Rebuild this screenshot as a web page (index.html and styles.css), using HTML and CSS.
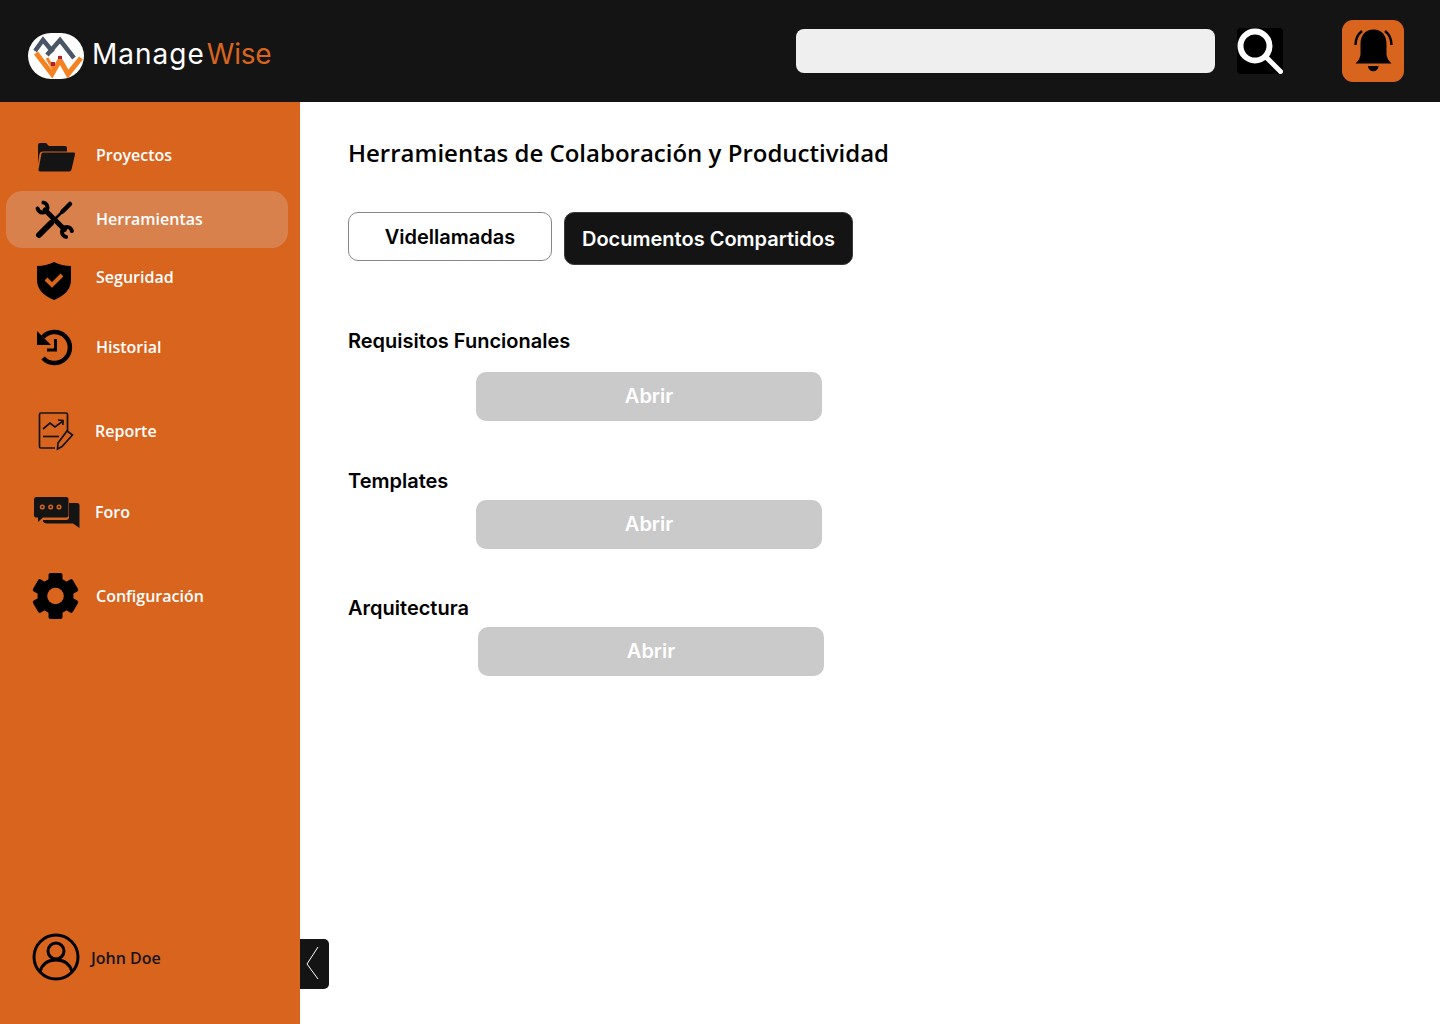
FILE: index.html
```html
<!DOCTYPE html>
<html lang="es">
<head>
    <meta charset="UTF-8">
    <meta name="viewport" content="width=device-width, initial-scale=1.0">
    <title>ManageWise - Herramientas</title>
    <link rel="stylesheet" href="styles.css">
</head>
<body>
    <header class="topbar">
        <a class="brand" href="#">
            <svg class="brand-mark" viewBox="28 33 56 46" width="56" height="46">
                <rect x="28" y="33" width="56" height="46" rx="23" fill="#fff"/>
                <g fill="none" stroke-linejoin="miter">
                    <polyline points="35,51 43,40 53,52" stroke="#4a5565" stroke-width="4.500"/>
                    <polyline points="47,55 60,40 74,58" stroke="#4a5565" stroke-width="4.500"/>
                    <polyline points="36,53 52,74 60,60 68,74 81,58" stroke="#f58220" stroke-width="5"/>
                    <polyline points="47,58 54,70" stroke="#f58220" stroke-width="3"/>
                </g>
                <rect x="51" y="62" width="4" height="4" fill="#b01e3c"/>
                <rect x="58" y="56" width="4" height="3" fill="#b01e3c"/>
            </svg>
            <span class="brand-name">Manage<span class="brand-accent">Wise</span></span>
        </a>
        <input class="search-input" type="text" aria-label="Buscar">
        <button class="search-btn" aria-label="Buscar">
            <svg viewBox="0 0 46 46" width="46" height="46" fill="none" stroke="#fff">
                <circle cx="18" cy="18" r="14.500" stroke-width="6"/>
                <line x1="29" y1="29" x2="43.500" y2="43.500" stroke-width="5" stroke-linecap="round"/>
            </svg>
        </button>
        <button class="bell-btn" aria-label="Notificaciones">
            <svg viewBox="0 0 62 62" width="62" height="62">
                <path d="M31.500 9.500C22.500 9.500 18.500 16 18.500 24V34Q18.500 39 13.500 43.500H49.500Q44.500 39 44.500 34V24C44.500 16 40.500 9.500 31.500 9.500z" fill="#000"/>
                <path d="M26 46H36.500a5.200 5.200 0 0 1-10.500 0z" fill="#000"/>
                <path d="M13.500 25Q13.500 16 20 11M49.500 25Q49.500 16 43 11" fill="none" stroke="#000" stroke-width="2.500"/>
            </svg>
        </button>
    </header>

    <div class="layout">
        <aside class="sidebar">
            <nav class="nav">
                <a class="nav-item" href="#">
                    <svg class="nav-icon" viewBox="0 0 50 57">
                        <path d="M8 18q0-2 2-2h6l3 3h16q2 0 2 2v3.500H13q-3 0-3.600 3L8 37z" fill="#141414"/>
                        <path d="M13 25.500h31q1.500 0 1 2l-3.500 15q-.5 2-2.500 2H10q-2 0-1.500-2l2.800-15q.3-2 1.700-2z" fill="#141414"/>
                    </svg>
                    <span>Proyectos</span>
                </a>
                <a class="nav-item nav-item-active" href="#">
                    <svg class="nav-icon" viewBox="0 0 50 57" fill="none" stroke="#000" stroke-linecap="round">
                        <line x1="15" y1="19" x2="34.500" y2="38.500" stroke-width="5"/>
                        <path d="M13.400 11.600A5 5 0 1 1 7.600 17.400" stroke-width="4"/>
                        <path d="M36.100 45.900A5 5 0 1 1 41.900 40.100" stroke-width="4"/>
                        <line x1="9" y1="44" x2="21" y2="32" stroke-width="6"/>
                        <line x1="25" y1="28" x2="32" y2="21" stroke-width="2.500"/>
                        <line x1="32.500" y1="20.500" x2="40" y2="13" stroke-width="4.500"/>
                    </svg>
                    <span>Herramientas</span>
                </a>
                <a class="nav-item" href="#">
                    <svg class="nav-icon" viewBox="0 0 50 57">
                        <path d="M24 13q8 4 17 4V31q0 13-17 20Q7 44 7 31V17q9 0 17-4z" fill="#000"/>
                        <polyline points="16,30 22,36 32,26" fill="none" stroke="#d9641e" stroke-width="4"/>
                    </svg>
                    <span>Seguridad</span>
                </a>
                <a class="nav-item" href="#">
                    <svg class="nav-icon" viewBox="0 0 50 57">
                        <path d="M13 18A15.500 15.500 0 1 1 13 39" fill="none" stroke="#000" stroke-width="4.500"/>
                        <polygon points="7,12 7,26 21,26" fill="#000"/>
                        <polyline points="17,31 25.500,31 25.500,20" fill="none" stroke="#000" stroke-width="3"/>
                    </svg>
                    <span>Historial</span>
                </a>
                <a class="nav-item nav-item-tight" href="#">
                    <svg class="nav-icon" viewBox="0 0 50 57" fill="none" stroke="#141414" stroke-width="1.700">
                        <path d="M25 45H11q-1.500 0-1.500-1.500V11.500q0-1.500 1.500-1.500H36q1.500 0 1.500 1.500V28"/>
                        <polyline points="13,26 20,20 25,24 33,18"/>
                        <polyline points="28,17 33,17.500 33,22"/>
                        <line x1="13" y1="33.500" x2="29" y2="33.500"/>
                        <polygon points="37,28 42.500,32 32,43.500 27.500,46 28,40"/>
                    </svg>
                    <span>Reporte</span>
                </a>
                <a class="nav-item nav-item-tight" href="#">
                    <svg class="nav-icon" viewBox="0 0 50 57">
                        <path d="M16 19H47q2.500 0 2.500 2.500V44L43 39.500H17q-3 0-4-2V36H36q3 0 3-3V19z" fill="#141414"/>
                        <path d="M6 13H36q2.500 0 2.500 2.500V31q0 2.500-2.500 2.500H13L8 38V33.500H6q-2 0-2-2V15.500Q4 13 6 13z" fill="#141414"/>
                        <g fill="none" stroke="#d9641e" stroke-width="1.500">
                            <circle cx="12.300" cy="23" r="1.800"/>
                            <circle cx="20.700" cy="23" r="1.800"/>
                            <circle cx="29" cy="23" r="1.800"/>
                        </g>
                    </svg>
                    <span>Foro</span>
                </a>
                <a class="nav-item" href="#">
                    <svg class="nav-icon" viewBox="0 0 50 57">
                        <g fill="#000">
                            <circle cx="25.500" cy="28" r="18"/>
                            <rect x="18.500" y="5" width="14" height="46" rx="2"/>
                            <rect x="18.500" y="5" width="14" height="46" rx="2" transform="rotate(60 25.500 28)"/>
                            <rect x="18.500" y="5" width="14" height="46" rx="2" transform="rotate(120 25.500 28)"/>
                        </g>
                        <circle cx="25.500" cy="28" r="8.300" fill="#d9641e"/>
                    </svg>
                    <span>Configuración</span>
                </a>
            </nav>
            <div class="user">
                <svg viewBox="0 0 48 48" width="48" height="48" fill="none" stroke="#000" stroke-width="3">
                    <circle cx="24" cy="24" r="22"/>
                    <circle cx="24" cy="18" r="8"/>
                    <path d="M8 39Q11 27 24 27T40 39"/>
                </svg>
                <span>John Doe</span>
            </div>
        </aside>

        <button class="collapse-btn" aria-label="Contraer">
            <svg viewBox="0 0 29 50" width="29" height="50" fill="none" stroke="#fff" stroke-width="1">
                <polyline points="18,8 7,25 18,40"/>
            </svg>
        </button>

        <main class="content">
            <h1 class="page-title">Herramientas de Colaboración y Productividad</h1>
            <div class="tabs">
                <button class="tab">Videllamadas</button>
                <button class="tab tab-active">Documentos Compartidos</button>
            </div>
            <section class="docs">
                <div class="doc doc-first">
                    <h2 class="doc-title">Requisitos Funcionales</h2>
                    <button class="open-btn">Abrir</button>
                </div>
                <div class="doc">
                    <h2 class="doc-title">Templates</h2>
                    <button class="open-btn">Abrir</button>
                </div>
                <div class="doc doc-last">
                    <h2 class="doc-title">Arquitectura</h2>
                    <button class="open-btn">Abrir</button>
                </div>
            </section>
        </main>
    </div>
</body>
</html>
```

FILE: styles.css
```css
* {
    box-sizing: border-box;
}
body {
    margin: 0;
    height: 1024px;
    overflow: hidden;
    font-family: "Open Sans", sans-serif;
    background-color: #fff;
    color: #000;
}
button {
    font-family: Inter, sans-serif;
    cursor: pointer;
}

/* Barra superior */
.topbar {
    height: 102px;
    background-color: #141414;
    display: flex;
    align-items: center;
    padding: 0 36px 0 28px;
}
.brand {
    display: flex;
    align-items: center;
    margin-top: 10px;
    margin-right: auto;
    text-decoration: none;
}
.brand-mark {
    display: block;
}
.brand-name {
    margin-left: 8px;
    margin-top: -4px;
    font-family: Inter, sans-serif;
    font-size: 28px;
    font-weight: 400;
    letter-spacing: 1px;
    color: #fff;
}
.brand-accent {
    margin-left: 2px;
    letter-spacing: -0.2px;
    color: #d9641e;
}
.search-input {
    width: 419px;
    height: 44px;
    border: none;
    border-radius: 8px;
    background-color: #efefef;
}
.search-btn {
    width: 46px;
    height: 46px;
    margin-left: 22px;
    padding: 0;
    border: none;
    border-radius: 4px;
    background-color: #000;
}
.bell-btn {
    width: 62px;
    height: 62px;
    margin-left: 59px;
    padding: 0;
    border: none;
    border-radius: 11px;
    background-color: #d9641e;
}
.search-btn svg, .bell-btn svg {
    display: block;
}

/* Menu lateral */
.layout {
    position: relative;
    display: flex;
    height: 922px;
}
.sidebar {
    width: 300px;
    flex-shrink: 0;
    background-color: #d9641e;
    padding-top: 25px;
    display: flex;
    flex-direction: column;
}
.nav {
    display: grid;
    grid-template-rows: 64px 58px 70px 84px 81px 84px auto;
}
.nav-item {
    height: 57px;
    width: 282px;
    margin-left: 6px;
    padding-left: 24px;
    display: flex;
    align-items: center;
    gap: 16px;
    border-radius: 16px;
    color: #fff;
    font-size: 16px;
    font-weight: 600;
    text-decoration: none;
}
.nav-item span {
    margin-bottom: 2px;
}
.nav-item-active {
    background-color: rgba(217, 217, 217, 0.25);
}
.nav-item-tight {
    gap: 15px;
}
.nav-icon {
    width: 50px;
    height: 57px;
    flex-shrink: 0;
}
.user {
    margin-top: auto;
    margin-bottom: 43px;
    padding-left: 32px;
    display: flex;
    align-items: center;
    gap: 11px;
    color: #141414;
    font-size: 16px;
    font-weight: 600;
}
.user svg {
    display: block;
}
.user span {
    margin-top: 2px;
}
.collapse-btn {
    position: absolute;
    left: 300px;
    top: 837px;
    width: 29px;
    height: 50px;
    padding: 0;
    border: none;
    border-radius: 0 5px 5px 0;
    background-color: #141414;
}
.collapse-btn svg {
    display: block;
}

/* Contenido */
.content {
    flex: 1;
    padding: 34px 0 0 48px;
}
.page-title {
    margin: 0;
    font-size: 24px;
    line-height: 33px;
    font-weight: 600;
}
.tabs {
    margin-top: 43px;
    display: flex;
    align-items: flex-start;
    gap: 12px;
}
.tab {
    width: 204px;
    height: 49px;
    padding: 0;
    border: 1px solid #888;
    border-radius: 10px;
    background-color: #fff;
    color: #000;
    font-size: 20px;
    font-weight: 600;
}
.tab-active {
    width: 289px;
    height: 53px;
    border-color: #3a3a3a;
    background-color: #141414;
    color: #fff;
}
.docs {
    margin-top: 64px;
}
.doc {
    margin-bottom: 48px;
}
.doc-title {
    margin: 0 0 7px;
    font-family: Inter, sans-serif;
    font-size: 20px;
    line-height: 24px;
    font-weight: 600;
}
.doc-first .doc-title {
    margin-bottom: 19px;
}
.open-btn {
    display: block;
    width: 346px;
    height: 49px;
    margin-left: 128px;
    padding: 0 0 2px;
    border: none;
    border-radius: 10px;
    background-color: #cacaca;
    color: #fff;
    font-size: 20px;
    font-weight: 600;
}
.doc-last {
    margin-top: -1px;
}
.doc-last .open-btn {
    margin-left: 130px;
}
```
